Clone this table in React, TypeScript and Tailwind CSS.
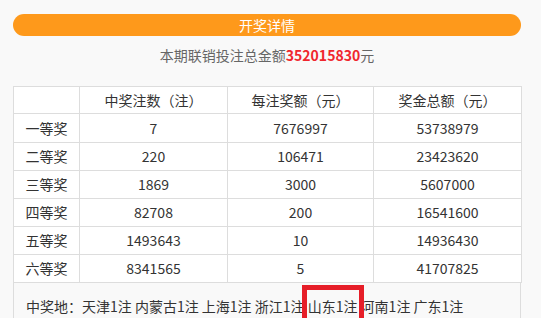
import React from 'react';

const rows = [
  ['一等奖', '7', '7676997', '53738979'],
  ['二等奖', '220', '106471', '23423620'],
  ['三等奖', '1869', '3000', '5607000'],
  ['四等奖', '82708', '200', '16541600'],
  ['五等奖', '1493643', '10', '14936430'],
  ['六等奖', '8341565', '5', '41707825'],
];

const places = ['天津1注', '内蒙古1注', '上海1注', '浙江1注', '山东1注', '河南1注', '广东1注'];

export default function App() {
  return (
    <div
      className="min-h-screen bg-[#f9f9f9] pt-[14px] pl-[13px] text-[14px] text-[#333]"
      style={{ fontFamily: '"Noto Sans CJK SC", "Noto Sans", sans-serif' }}
    >
      <div className="w-[508px]">
        <div className="h-[22px] rounded-full bg-[#fe991b] text-center leading-[22px] text-white">开奖详情</div>
        <p className="mt-[9px] h-[20px] text-center leading-[20px] text-[#666]">
          本期联销投注总金额<span className="font-bold text-[#f0262d]">352015830</span>元
        </p>

        <table className="mt-[21px] w-[508px] table-fixed border-collapse bg-white text-center">
          <colgroup>
            <col className="w-[66px]" />
            <col className="w-[148px]" />
            <col className="w-[146px]" />
            <col className="w-[148px]" />
          </colgroup>
          <thead>
            <tr className="h-[27px]">
              <th className="border border-[#dddddd] font-normal"></th>
              <th className="border border-[#dddddd] font-normal">中奖注数（注）</th>
              <th className="border border-[#dddddd] font-normal">每注奖额（元）</th>
              <th className="border border-[#dddddd] font-normal">奖金总额（元）</th>
            </tr>
          </thead>
          <tbody>
            {rows.map((r, idx) => (
              <tr key={idx} className={idx === 0 ? 'h-[29px]' : 'h-[28px]'}>
                {r.map((c, j) => (
                  <td key={j} className="border border-[#dddddd] p-0">{c}</td>
                ))}
              </tr>
            ))}
          </tbody>
        </table>

        <div className="h-[60px] border-x border-[#dddddd] pl-[12px] pt-[12px] leading-[22px]">
          中奖地：
          {places.map((p, i) => (
            <React.Fragment key={i}>
              {p === '山东1注' ? (
                <span className="relative">
                  {p}
                  <span className="absolute -left-[6px] -top-[11px] h-[50px] w-[62px] border-[5px] border-[#e61e28]"></span>
                </span>
              ) : (
                p
              )}
              {i < places.length - 1 ? ' ' : ''}
            </React.Fragment>
          ))}
        </div>
      </div>
    </div>
  );
}
